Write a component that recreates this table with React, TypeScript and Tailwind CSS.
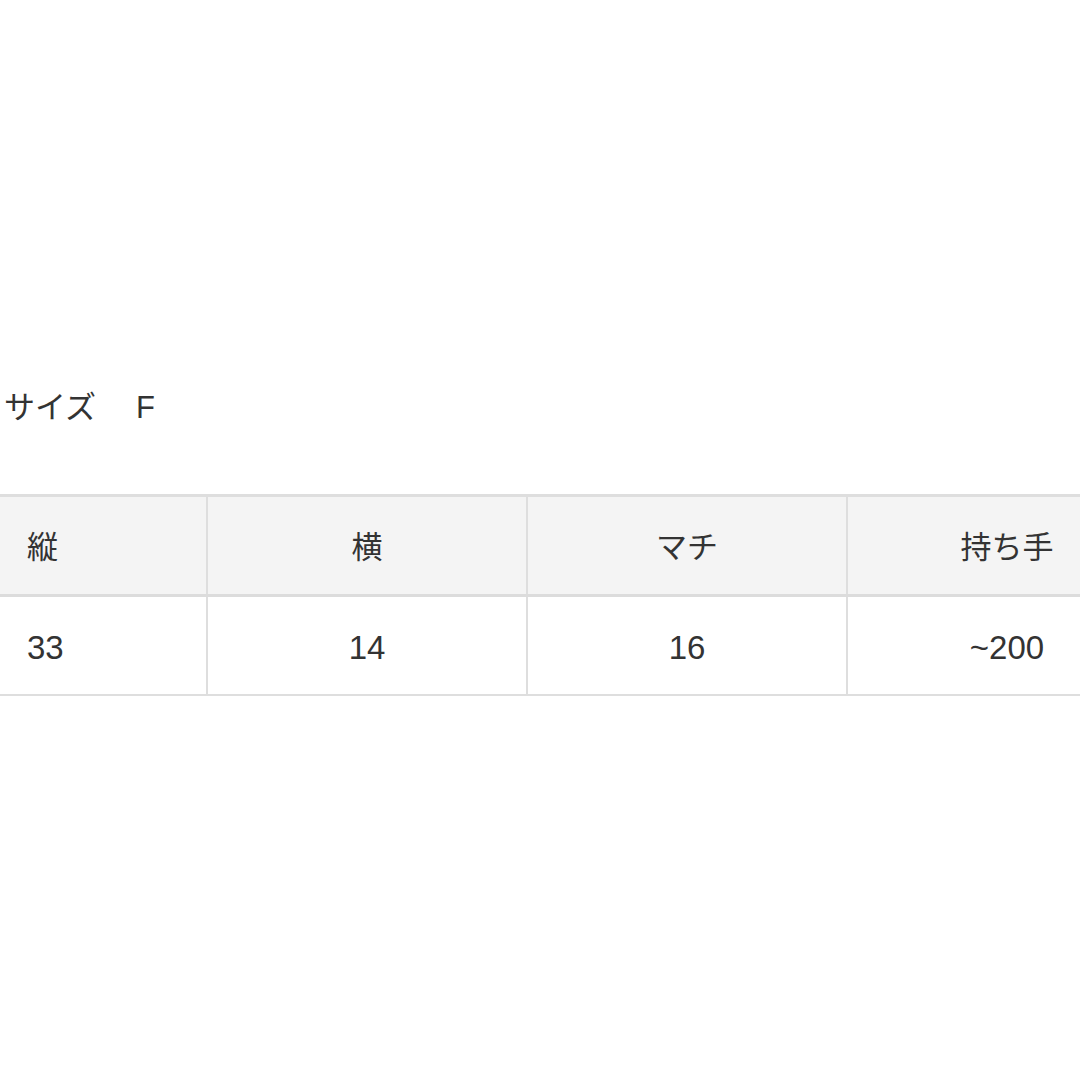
const FONT = '"Liberation Sans", "Noto Sans CJK JP", sans-serif';

const HEAD = ['縦', '横', 'マチ', '持ち手'];
const ROW = ['33', '14', '16', '~200'];

function Cell({ text, first }: { text: string; first?: boolean }) {
  return (
    <div
      className={
        first
          ? 'w-[206px] shrink-0 flex items-center pl-[27px] pt-[4px]'
          : 'w-[320px] shrink-0 flex items-center justify-center pt-[4px] border-l-2 border-[#dedede]'
      }
    >
      {text}
    </div>
  );
}

export default function App() {
  return (
    <div
      className="w-[1080px] h-[1080px] bg-white overflow-hidden text-[#333333]"
      style={{ fontFamily: FONT }}
    >
      {/* title */}
      <div className="pt-[386px] pl-[4px] flex items-center h-[428px] text-[31px] leading-none">
        <span>サイズ</span>
        <span className="ml-[40px]">F</span>
      </div>

      {/* size table */}
      <div className="mt-[66px] w-[1170px] border-t-[3px] border-b-2 border-[#dedede] text-[33px] leading-none">
        <div className="flex h-[100px] bg-[#f4f4f4] border-b-[3px] border-[#dcdcdc] text-[31px]">
          {HEAD.map((h, i) => (
            <Cell key={h} text={h} first={i === 0} />
          ))}
        </div>
        <div className="flex h-[97px] bg-white">
          {ROW.map((v, i) => (
            <Cell key={v} text={v} first={i === 0} />
          ))}
        </div>
      </div>
    </div>
  );
}
